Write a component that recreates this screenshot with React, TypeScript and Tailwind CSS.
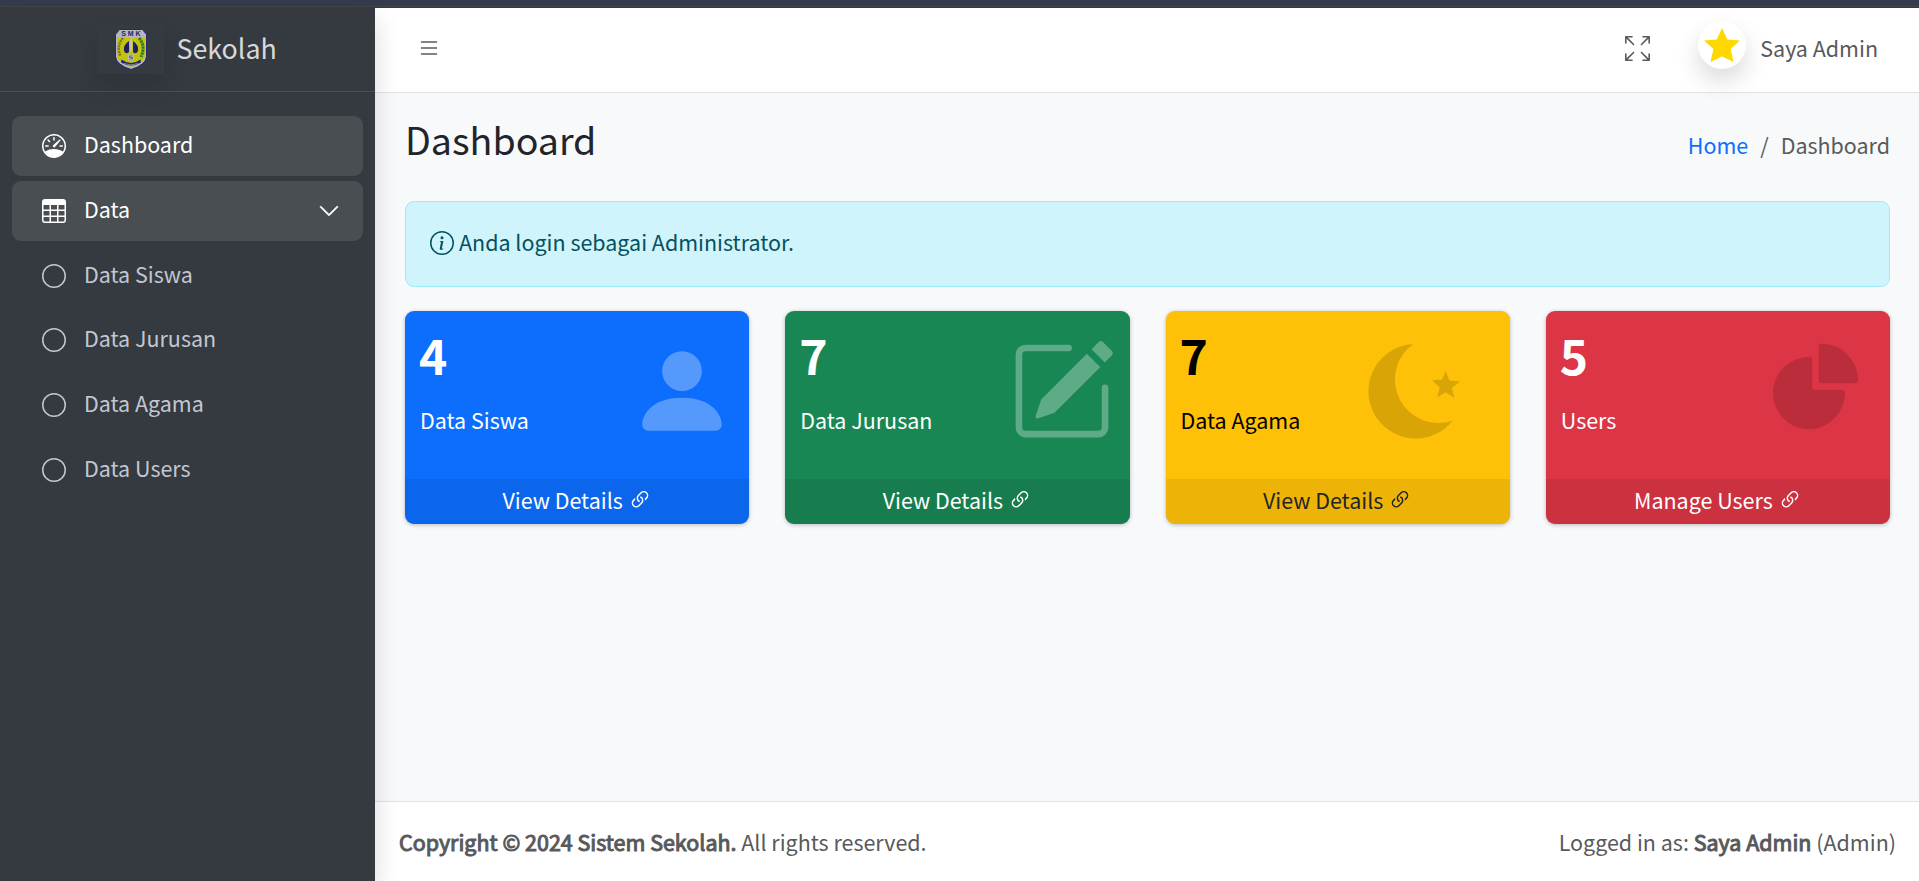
import type { ReactNode } from "react";
import {
  BsArrowsFullscreen,
  BsChevronDown,
  BsCircle,
  BsInfoCircle,
  BsLink45Deg,
  BsList,
  BsPencilSquare,
  BsPersonFill,
  BsSpeedometer,
  BsTable,
} from "react-icons/bs";

function SchoolLogo() {
  return (
    <svg viewBox="0 0 32 41" className="h-[41px] w-[32px]">
      <path d="M4.500 .5h23l4 5V28q-1 8-15.500 12.500Q1.500 36 .5 28V5.500z" fill="#d6d6de" stroke="#23238a" />
      <path d="M2 8.500h28V27q-1 7-14 11Q3 34 2 27z" fill="#e6e600" />
      <text x="16.800" y="7.300" textAnchor="middle" fontSize="7" fontWeight="700" letterSpacing="1.800" fill="#1b1b80" className="font-['Liberation_Sans',sans-serif]">SMK</text>
      <path d="M8 9Q1 17 5.500 27" fill="none" stroke="#8a8420" strokeWidth="2.500" strokeDasharray="2 .8" />
      <path d="M24 9q7 8 2 19" fill="none" stroke="#2f8a2a" strokeWidth="3" strokeDasharray="2.500 .6" />
      <path d="M14 12q-6 4-5 10 2 4 5 1zM18 12q6 4 5 10-2 4-5 1z" fill="#1c1c66" />
      <path d="M16 8l1.500 5-.7 9h-1.600l-.7-9z" fill="#e4e4d8" />
      <path d="M13 25.500h6v6h-6z" fill="#dcdcdc" />
      <path d="M17.500 27h-3v1.500h3V30h-3" fill="none" stroke="#555585" strokeWidth=".8" />
      <path d="M6.500 30.500q9.500 7 19 0l.5 3q-10 6-20 0z" fill="#22227a" />
      <path d="M9 34.500q7 3 14 0" fill="none" stroke="#b5b5b5" strokeWidth=".8" />
    </svg>
  );
}

function NavItem({ icon, label, active, open }: { icon: ReactNode; label: string; active?: boolean; open?: boolean }) {
  return (
    <a
      className={
        active
          ? "flex h-[60px] items-center rounded-[9px] bg-[#494e52] pr-[23px] pl-[30px] text-white"
          : "flex h-[60px] items-center rounded-[9px] pr-[23px] pl-[30px] text-[#c2c7d0]"
      }
    >
      <span className="text-[24px]">{icon}</span>
      <span className="ml-[18px] grow pb-[4px]">{label}</span>
      {open && <BsChevronDown className="size-[22px] stroke-[0.5px]" />}
    </a>
  );
}

type BoxProps = { value: string; label: string; link: string; box: string; foot: string; children: ReactNode };

function StatBox({ value, label, link, box, foot, children }: BoxProps) {
  return (
    <div className={`relative flex h-[213px] flex-col overflow-hidden rounded-[9px] shadow-[0_0_1px_rgba(0,0,0,0.125),0_1px_4px_rgba(0,0,0,0.25)] ${box}`}>
      <div className="grow px-[15px] pt-3">
        <div className="-ml-px text-[48px] leading-[63px] font-bold">{value}</div>
        <p className="mt-4 leading-9">{label}</p>
      </div>
      {children}
      <a className={`flex h-[45px] items-center justify-center bg-black/[0.07] pb-1 ${foot}`}>
        {link}
        <BsLink45Deg className="ml-[5px] size-6" />
      </a>
    </div>
  );
}

export default function App() {
  return (
    <div className="flex h-[881px] w-full flex-col overflow-hidden bg-[#f8f9fa] font-['Noto_Sans_CJK_SC',sans-serif] text-[21.480px] leading-9 text-[#212529]">
      <div className="h-[7px] shrink-0 border-b border-[#454549] bg-[#343c4d]" />
      <div className="flex min-h-0 grow">
        <aside className="z-10 flex w-[375px] shrink-0 flex-col bg-[#353a40] shadow-[0_12px_24px_rgba(0,0,0,0.15)]">
          <div className="flex h-[85px] shrink-0 items-center border-b border-[#4b4f54] pl-[97px]">
            <span className="flex h-[50px] w-[67px] items-center justify-center opacity-80 shadow-[0_12px_24px_rgba(0,0,0,0.15)]">
              <SchoolLogo />
            </span>
            <span className="ml-[12.500px] pb-[2px] text-[26.800px] text-[#d7d8d9]">Sekolah</span>
          </div>
          <nav className="flex flex-col gap-[4.800px] px-3 pt-6">
            <NavItem icon={<BsSpeedometer />} label="Dashboard" active />
            <NavItem icon={<BsTable />} label="Data" active open />
            <NavItem icon={<BsCircle />} label="Data Siswa" />
            <NavItem icon={<BsCircle />} label="Data Jurusan" />
            <NavItem icon={<BsCircle />} label="Data Agama" />
            <NavItem icon={<BsCircle />} label="Data Users" />
          </nav>
        </aside>

        <div className="flex min-w-0 grow flex-col">
          <header className="flex h-[86px] shrink-0 items-center border-t border-b border-t-[#353a40] border-b-[#dee2e6] bg-white pr-[41px] pb-1 pl-[42px] text-[#58595b]">
            <BsList className="size-6" />
            <BsArrowsFullscreen className="ml-auto size-[25px]" />
            <span className="mb-[6px] ml-12 flex size-12 items-center justify-center rounded-full bg-white shadow-[0_12px_24px_rgba(0,0,0,0.15)]">
              <svg viewBox="0 0 36 34" className="h-[34px] w-9">
                <path d="M18 0l5.300 11.500L36 12.600l-9.400 8.400L29.500 34 18 28.500 6.500 34 9.400 21 0 12.600l12.700-1.100z" fill="#ffd800" />
              </svg>
            </span>
            <span className="ml-[14px]">Saya Admin</span>
          </header>

          <main className="grow pr-[29px] pl-[30px]">
            <div className="flex h-[108px] items-start justify-between">
              <h1 className="mt-[21px] text-[37.600px] leading-[50px]">Dashboard</h1>
              <div className="mt-[34px] flex text-[#58595b]">
                <a className="text-[#0d6efd]">Home</a>
                <span className="px-3">/</span>
                <span>Dashboard</span>
              </div>
            </div>
            <div className="flex h-[86px] items-center rounded-[9px] border border-[#9eeaf9] bg-[#cff4fc] pl-6 text-[#055160]">
              <BsInfoCircle className="mb-[3px] size-6" />
              <span className="ml-[5px] pb-1">Anda login sebagai Administrator.</span>
            </div>
            <div className="mt-6 grid grid-cols-4 gap-9">
              <StatBox value="4" label="Data Siswa" link="View Details" box="bg-[#0d6efd] text-white" foot="text-white">
                <BsPersonFill className="absolute top-[27px] right-[14px] size-[106px] text-white/30" />
              </StatBox>
              <StatBox value="7" label="Data Jurusan" link="View Details" box="bg-[#198754] text-white" foot="text-white">
                <BsPencilSquare className="absolute top-[26.500px] right-[15px] size-[106px] text-white/30" />
              </StatBox>
              <StatBox value="7" label="Data Agama" link="View Details" box="bg-[#ffc107] text-black" foot="text-[#212529]">
                <svg viewBox="0 0 92 95" className="absolute top-[33px] right-[49.500px] h-[95px] w-[92px] fill-black/15">
                  <path d="M45.200 0A47.300 47.300 0 1 0 84.700 76.700A43.600 43.600 0 0 1 45.200 0z" />
                  <path d="M77.700 27l3.800 9.600 10.400.8-8.100 6.500 2.700 10-8.800-5.600-8.500 5.200 2.500-10.100-7.700-7.200 9.800-.5z" />
                </svg>
              </StatBox>
              <StatBox value="5" label="Users" link="Manage Users" box="bg-[#dc3545] text-white" foot="text-white">
                <svg viewBox="0 0 24 24" className="absolute top-[23px] right-[22px] size-[105px] fill-black/15">
                  <path d="M2.250 13.500a8.250 8.250 0 0 1 8.250-8.250.75.75 0 0 1 .75.75v6.750H18a.75.75 0 0 1 .75.75 8.250 8.250 0 0 1-16.500 0z" />
                  <path d="M12.750 3a.75.75 0 0 1 .75-.75 8.250 8.250 0 0 1 8.250 8.250.75.75 0 0 1-.75.75h-7.500a.75.75 0 0 1-.75-.75V3z" />
                </svg>
              </StatBox>
            </div>
          </main>

          <footer className="flex h-20 shrink-0 items-center justify-between border-t border-[#dee2e6] bg-white pr-[23px] pl-6 text-[#58595b]">
            <div>
              <span className="[-webkit-text-stroke:1px_#58595b]">Copyright © 2024 Sistem Sekolah.</span> All rights reserved.
            </div>
            <div>
              Logged in as: <span className="[-webkit-text-stroke:1px_#58595b]">Saya Admin</span> (Admin)
            </div>
          </footer>
        </div>
      </div>
    </div>
  );
}
